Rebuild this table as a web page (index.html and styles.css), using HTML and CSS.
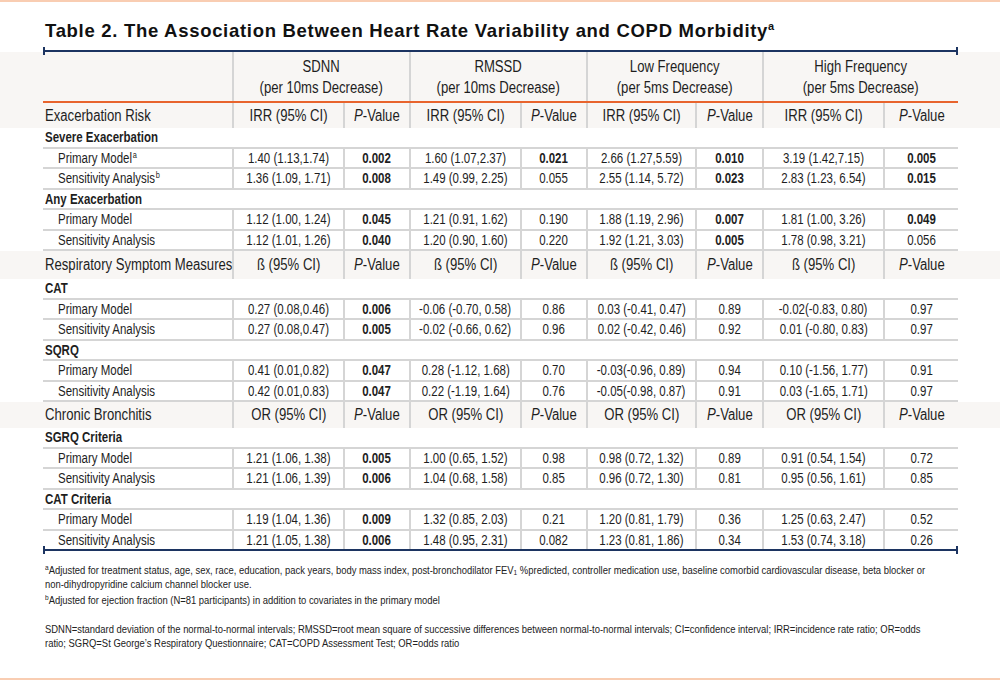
FILE: index.html
```
<!DOCTYPE html>
<html>
<head>
<meta charset="utf-8">
<link rel="stylesheet" href="styles.css">
</head>
<body>
<div class="page">
  <div class="topbar"></div>
  <h1 class="title">Table 2. The Association Between Heart Rate Variability and COPD Morbidity<sup>a</sup></h1>
  <div class="rule rule-top"></div>

  <div class="band">
    <div class="grid hdr1">
      <div class="cell"></div>
      <div class="cell sep span2"><span class="t">SDNN<br>(per 10ms Decrease)</span></div>
      <div class="cell sep span2"><span class="t">RMSSD<br>(per 10ms Decrease)</span></div>
      <div class="cell sep span2"><span class="t">Low Frequency<br>(per 5ms Decrease)</span></div>
      <div class="cell sep span2"><span class="t">High Frequency<br>(per 5ms Decrease)</span></div>
    </div>
    <div class="grid hdr2">
      <div class="cell lbl"><span class="t">Exacerbation Risk</span></div>
      <div class="cell sep"><span class="t">IRR (95% CI)</span></div><div class="cell sep"><span class="t"><i>P</i>-Value</span></div>
      <div class="cell sep"><span class="t">IRR (95% CI)</span></div><div class="cell sep"><span class="t"><i>P</i>-Value</span></div>
      <div class="cell sep"><span class="t">IRR (95% CI)</span></div><div class="cell sep"><span class="t"><i>P</i>-Value</span></div>
      <div class="cell sep"><span class="t">IRR (95% CI)</span></div><div class="cell sep"><span class="t"><i>P</i>-Value</span></div>
    </div>
  </div>

  <div class="group"><span class="t">Severe Exacerbation</span></div>
  <div class="grid data">
    <div class="cell name"><span class="t">Primary Model<sup>a</sup></span></div>
    <div class="cell sep"><span class="t">1.40 (1.13,1.74)</span></div><div class="cell sep b"><span class="t">0.002</span></div>
    <div class="cell sep"><span class="t">1.60 (1.07,2.37)</span></div><div class="cell sep b"><span class="t">0.021</span></div>
    <div class="cell sep"><span class="t">2.66 (1.27,5.59)</span></div><div class="cell sep b"><span class="t">0.010</span></div>
    <div class="cell sep"><span class="t">3.19 (1.42,7.15)</span></div><div class="cell sep b"><span class="t">0.005</span></div>
  </div>
  <div class="grid data">
    <div class="cell name"><span class="t">Sensitivity Analysis<sup>b</sup></span></div>
    <div class="cell sep"><span class="t">1.36 (1.09, 1.71)</span></div><div class="cell sep b"><span class="t">0.008</span></div>
    <div class="cell sep"><span class="t">1.49 (0.99, 2.25)</span></div><div class="cell sep"><span class="t">0.055</span></div>
    <div class="cell sep"><span class="t">2.55 (1.14, 5.72)</span></div><div class="cell sep b"><span class="t">0.023</span></div>
    <div class="cell sep"><span class="t">2.83 (1.23, 6.54)</span></div><div class="cell sep b"><span class="t">0.015</span></div>
  </div>
  <div class="group"><span class="t">Any Exacerbation</span></div>
  <div class="grid data">
    <div class="cell name"><span class="t">Primary Model</span></div>
    <div class="cell sep"><span class="t">1.12 (1.00, 1.24)</span></div><div class="cell sep b"><span class="t">0.045</span></div>
    <div class="cell sep"><span class="t">1.21 (0.91, 1.62)</span></div><div class="cell sep"><span class="t">0.190</span></div>
    <div class="cell sep"><span class="t">1.88 (1.19, 2.96)</span></div><div class="cell sep b"><span class="t">0.007</span></div>
    <div class="cell sep"><span class="t">1.81 (1.00, 3.26)</span></div><div class="cell sep b"><span class="t">0.049</span></div>
  </div>
  <div class="grid data">
    <div class="cell name"><span class="t">Sensitivity Analysis</span></div>
    <div class="cell sep"><span class="t">1.12 (1.01, 1.26)</span></div><div class="cell sep b"><span class="t">0.040</span></div>
    <div class="cell sep"><span class="t">1.20 (0.90, 1.60)</span></div><div class="cell sep"><span class="t">0.220</span></div>
    <div class="cell sep"><span class="t">1.92 (1.21, 3.03)</span></div><div class="cell sep b"><span class="t">0.005</span></div>
    <div class="cell sep"><span class="t">1.78 (0.98, 3.21)</span></div><div class="cell sep"><span class="t">0.056</span></div>
  </div>

  <div class="band">
    <div class="grid sub sub-tall">
      <div class="cell lbl"><span class="t">Respiratory Symptom Measures</span></div>
      <div class="cell sep"><span class="t">ß (95% CI)</span></div><div class="cell sep"><span class="t"><i>P</i>-Value</span></div>
      <div class="cell sep"><span class="t">ß (95% CI)</span></div><div class="cell sep"><span class="t"><i>P</i>-Value</span></div>
      <div class="cell sep"><span class="t">ß (95% CI)</span></div><div class="cell sep"><span class="t"><i>P</i>-Value</span></div>
      <div class="cell sep"><span class="t">ß (95% CI)</span></div><div class="cell sep"><span class="t"><i>P</i>-Value</span></div>
    </div>
  </div>

  <div class="group"><span class="t">CAT</span></div>
  <div class="grid data">
    <div class="cell name"><span class="t">Primary Model</span></div>
    <div class="cell sep"><span class="t">0.27 (0.08,0.46)</span></div><div class="cell sep b"><span class="t">0.006</span></div>
    <div class="cell sep"><span class="t">-0.06 (-0.70, 0.58)</span></div><div class="cell sep"><span class="t">0.86</span></div>
    <div class="cell sep"><span class="t">0.03 (-0.41, 0.47)</span></div><div class="cell sep"><span class="t">0.89</span></div>
    <div class="cell sep"><span class="t">-0.02(-0.83, 0.80)</span></div><div class="cell sep"><span class="t">0.97</span></div>
  </div>
  <div class="grid data">
    <div class="cell name"><span class="t">Sensitivity Analysis</span></div>
    <div class="cell sep"><span class="t">0.27 (0.08,0.47)</span></div><div class="cell sep b"><span class="t">0.005</span></div>
    <div class="cell sep"><span class="t">-0.02 (-0.66, 0.62)</span></div><div class="cell sep"><span class="t">0.96</span></div>
    <div class="cell sep"><span class="t">0.02 (-0.42, 0.46)</span></div><div class="cell sep"><span class="t">0.92</span></div>
    <div class="cell sep"><span class="t">0.01 (-0.80, 0.83)</span></div><div class="cell sep"><span class="t">0.97</span></div>
  </div>
  <div class="group"><span class="t">SQRQ</span></div>
  <div class="grid data">
    <div class="cell name"><span class="t">Primary Model</span></div>
    <div class="cell sep"><span class="t">0.41 (0.01,0.82)</span></div><div class="cell sep b"><span class="t">0.047</span></div>
    <div class="cell sep"><span class="t">0.28 (-1.12, 1.68)</span></div><div class="cell sep"><span class="t">0.70</span></div>
    <div class="cell sep"><span class="t">-0.03(-0.96, 0.89)</span></div><div class="cell sep"><span class="t">0.94</span></div>
    <div class="cell sep"><span class="t">0.10 (-1.56, 1.77)</span></div><div class="cell sep"><span class="t">0.91</span></div>
  </div>
  <div class="grid data">
    <div class="cell name"><span class="t">Sensitivity Analysis</span></div>
    <div class="cell sep"><span class="t">0.42 (0.01,0.83)</span></div><div class="cell sep b"><span class="t">0.047</span></div>
    <div class="cell sep"><span class="t">0.22 (-1.19, 1.64)</span></div><div class="cell sep"><span class="t">0.76</span></div>
    <div class="cell sep"><span class="t">-0.05(-0.98, 0.87)</span></div><div class="cell sep"><span class="t">0.91</span></div>
    <div class="cell sep"><span class="t">0.03 (-1.65, 1.71)</span></div><div class="cell sep"><span class="t">0.97</span></div>
  </div>

  <div class="band">
    <div class="grid sub">
      <div class="cell lbl"><span class="t">Chronic Bronchitis</span></div>
      <div class="cell sep"><span class="t">OR (95% CI)</span></div><div class="cell sep"><span class="t"><i>P</i>-Value</span></div>
      <div class="cell sep"><span class="t">OR (95% CI)</span></div><div class="cell sep"><span class="t"><i>P</i>-Value</span></div>
      <div class="cell sep"><span class="t">OR (95% CI)</span></div><div class="cell sep"><span class="t"><i>P</i>-Value</span></div>
      <div class="cell sep"><span class="t">OR (95% CI)</span></div><div class="cell sep"><span class="t"><i>P</i>-Value</span></div>
    </div>
  </div>

  <div class="group"><span class="t">SGRQ Criteria</span></div>
  <div class="grid data">
    <div class="cell name"><span class="t">Primary Model</span></div>
    <div class="cell sep"><span class="t">1.21 (1.06, 1.38)</span></div><div class="cell sep b"><span class="t">0.005</span></div>
    <div class="cell sep"><span class="t">1.00 (0.65, 1.52)</span></div><div class="cell sep"><span class="t">0.98</span></div>
    <div class="cell sep"><span class="t">0.98 (0.72, 1.32)</span></div><div class="cell sep"><span class="t">0.89</span></div>
    <div class="cell sep"><span class="t">0.91 (0.54, 1.54)</span></div><div class="cell sep"><span class="t">0.72</span></div>
  </div>
  <div class="grid data">
    <div class="cell name"><span class="t">Sensitivity Analysis</span></div>
    <div class="cell sep"><span class="t">1.21 (1.06, 1.39)</span></div><div class="cell sep b"><span class="t">0.006</span></div>
    <div class="cell sep"><span class="t">1.04 (0.68, 1.58)</span></div><div class="cell sep"><span class="t">0.85</span></div>
    <div class="cell sep"><span class="t">0.96 (0.72, 1.30)</span></div><div class="cell sep"><span class="t">0.81</span></div>
    <div class="cell sep"><span class="t">0.95 (0.56, 1.61)</span></div><div class="cell sep"><span class="t">0.85</span></div>
  </div>
  <div class="group"><span class="t">CAT Criteria</span></div>
  <div class="grid data">
    <div class="cell name"><span class="t">Primary Model</span></div>
    <div class="cell sep"><span class="t">1.19 (1.04, 1.36)</span></div><div class="cell sep b"><span class="t">0.009</span></div>
    <div class="cell sep"><span class="t">1.32 (0.85, 2.03)</span></div><div class="cell sep"><span class="t">0.21</span></div>
    <div class="cell sep"><span class="t">1.20 (0.81, 1.79)</span></div><div class="cell sep"><span class="t">0.36</span></div>
    <div class="cell sep"><span class="t">1.25 (0.63, 2.47)</span></div><div class="cell sep"><span class="t">0.52</span></div>
  </div>
  <div class="grid data last">
    <div class="cell name"><span class="t">Sensitivity Analysis</span></div>
    <div class="cell sep"><span class="t">1.21 (1.05, 1.38)</span></div><div class="cell sep b"><span class="t">0.006</span></div>
    <div class="cell sep"><span class="t">1.48 (0.95, 2.31)</span></div><div class="cell sep"><span class="t">0.082</span></div>
    <div class="cell sep"><span class="t">1.23 (0.81, 1.86)</span></div><div class="cell sep"><span class="t">0.34</span></div>
    <div class="cell sep"><span class="t">1.53 (0.74, 3.18)</span></div><div class="cell sep"><span class="t">0.26</span></div>
  </div>
  <div class="rule rule-bottom"></div>

  <div class="notes">
    <div class="note"><span class="ln"><sup>a</sup>Adjusted for treatment status, age, sex, race, education, pack years, body mass index, post-bronchodilator FEV<sub>1</sub> %predicted, controller medication use, baseline comorbid cardiovascular disease, beta blocker or</span><span class="ln">non-dihydropyridine calcium channel blocker use.</span></div>
    <div class="note"><span class="ln"><sup>b</sup>Adjusted for ejection fraction (N=81 participants) in addition to covariates in the primary model</span></div>
    <div class="note abbr"><span class="ln">SDNN=standard deviation of the normal-to-normal intervals; RMSSD=root mean square of successive differences between normal-to-normal intervals; CI=confidence interval; IRR=incidence rate ratio; OR=odds</span><span class="ln">ratio; SGRQ=St George’s Respiratory Questionnaire; CAT=COPD Assessment Test; OR=odds ratio</span></div>
  </div>

  <div class="spacer"></div>
  <div class="bottombar"></div>
</div>
</body>
</html>
```

FILE: styles.css
```
* { box-sizing: border-box; }
html, body { margin: 0; padding: 0; background: #ffffff; }
body {
  width: 1000px;
  height: 680px;
  overflow: hidden;
  font-family: "Liberation Sans", Arial, sans-serif;
  color: #1e1e1e;
}
.page { width: 1000px; height: 680px; display: flex; flex-direction: column; overflow: hidden; }
.topbar { height: 2px; background: #f9cdb2; flex: none; }
.bottombar { height: 2px; background: #f9cdb2; flex: none; }
.spacer { flex: 1; }

.title {
  margin: 18px 0 0 45px;
  font-family: "Liberation Sans", Arial, sans-serif;
  font-weight: bold;
  font-size: 18.5px;
  line-height: 22px;
  letter-spacing: 0.7px;
  color: #111111;
  flex: none;
}
.title sup { font-size: 11px; line-height: 0; vertical-align: 7px; letter-spacing: 0; }

.rule {
  position: relative;
  height: 2px;
  background: #1c3461;
  margin: 0 42px 0 43px;
  flex: none;
}
.rule::before, .rule::after {
  content: "";
  position: absolute;
  top: -3px;
  width: 2px;
  height: 8px;
  background: #1c3461;
}
.rule::before { left: 0; }
.rule::after { right: 0; }
.rule-top { margin-top: 8px; }

.band { background: #f8f6f4; flex: none; }

.grid {
  display: grid;
  grid-template-columns: 189px 111px 66px 111px 66px 109px 67px 121px 75px;
  margin: 0 42px 0 43px;
}
.cell {
  display: flex;
  align-items: center;
  justify-content: center;
  text-align: center;
  white-space: nowrap;
  min-width: 0;
}
.t {
  display: inline-block;
  white-space: nowrap;
  transform: scaleX(0.82);
  transform-origin: center center;
  flex: none;
}
.sep { border-left: 2px solid #d5d5d5; }
.span2 { grid-column: span 2; }

.hdr1 { height: 49px; font-size: 16px; line-height: 21px; }
.hdr2 { height: 27px; border-top: 2px solid #e8642d; font-size: 16px; }
.sub { height: 26px; font-size: 16px; }
.sub-tall { height: 28px; }
.lbl { justify-content: flex-start; padding-left: 2px; }
.lbl .t, .name .t, .group .t { transform-origin: left center; }

.group {
  height: 20.5px;
  margin: 0 42px 0 43px;
  padding-left: 2px;
  border-bottom: 2px solid #d5d5d5;
  font-size: 14px;
  font-weight: bold;
  line-height: 19px;
  white-space: nowrap;
  flex: none;
}
.data {
  height: 20.5px;
  border-bottom: 2px solid #d5d5d5;
  font-size: 14px;
  flex: none;
}
.data.last { border-bottom: 0; height: 18.5px; }
.name { justify-content: flex-start; padding-left: 15px; }
.b { font-weight: bold; }
.name sup { font-size: 9px; line-height: 0; vertical-align: 5px; margin-left: 1px; }

.notes { margin: 12px 0 0 45px; font-size: 11.5px; line-height: 14px; color: #222; flex: none; }
.note { margin: 0 0 2px 0; }
.note.abbr { margin-top: 15px; }
.ln {
  display: block;
  width: max-content;
  white-space: nowrap;
  transform: scaleX(0.82);
  transform-origin: left center;
}
.note sup { font-size: 8px; line-height: 0; vertical-align: 4px; }
.note sub { font-size: 8px; line-height: 0; vertical-align: -1px; }
```
